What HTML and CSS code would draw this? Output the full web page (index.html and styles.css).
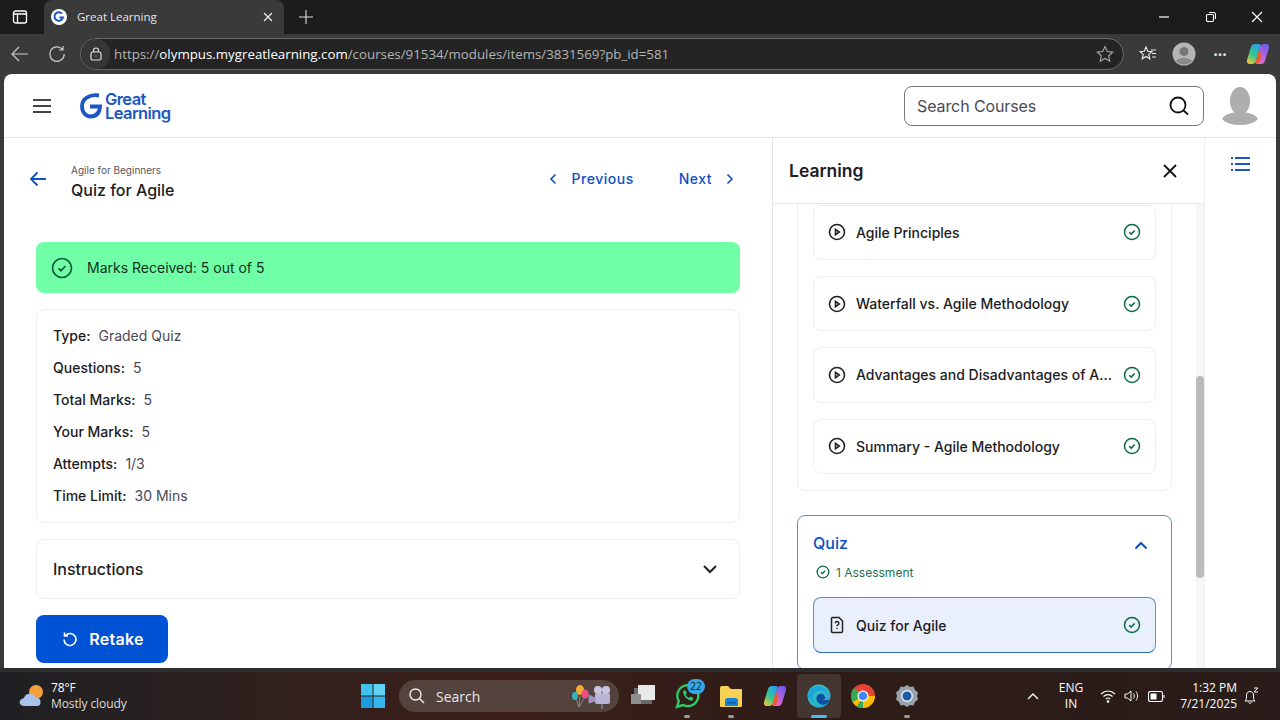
FILE: index.html
```html
<html>
<head>
  <title>Great Learning</title>
  <link rel="stylesheet" href="styles.css">
</head>
<body>
  <div class="tabstrip">
    <svg class="sidebar-btn" width="16" height="16" viewBox="0 0 16 16" fill="none" stroke="#fff" stroke-width="1.3"><rect x="1.5" y="2" width="13" height="12" rx="2"/><path d="M1.5 5h13M5.5 5v9" /></svg>
    <div class="tab">
      <svg width="16" height="16" viewBox="0 0 16 16"><circle cx="8" cy="8" r="8" fill="#fff"/><path d="M11 4.6A4.3 4.3 0 1 0 12 8.4H8.4" fill="none" stroke="#1a56c4" stroke-width="2"/></svg>
      <span class="tab-title">Great Learning</span>
      <svg class="tab-x" width="10" height="10" viewBox="0 0 10 10" stroke="#eee" stroke-width="1.2"><path d="M1 1l8 8M9 1l-8 8"/></svg>
    </div>
    <svg class="new-tab" width="14" height="14" viewBox="0 0 14 14" stroke="#ddd" stroke-width="1.1"><path d="M7 0v14M0 7h14"/></svg>
    <div class="win-btns">
      <svg width="12" height="12" viewBox="0 0 12 12" stroke="#fff" stroke-width="1.2"><path d="M1 6h10"/></svg>
      <svg width="12" height="12" viewBox="0 0 12 12" fill="none" stroke="#fff" stroke-width="1.1"><rect x="1.5" y="3.5" width="7" height="7" rx="1.2"/><path d="M4 1.5h4.5a2 2 0 0 1 2 2V8"/></svg>
      <svg width="12" height="12" viewBox="0 0 12 12" stroke="#fff" stroke-width="1.2"><path d="M1 1l10 10M11 1L1 11"/></svg>
    </div>
  </div>

  <div class="toolbar">
    <svg width="18" height="16" viewBox="0 0 18 16" fill="none" stroke="#ccc" stroke-width="1.2"><path d="M17 8H1M8 1L1 8l7 7"/></svg>
    <svg class="reload" width="18" height="18" viewBox="0 0 18 18" fill="none" stroke="#ccc" stroke-width="1.2"><path d="M14.5 4.5A7.2 7.2 0 1 0 16.2 9M15 1v4h-4"/></svg>
    <div class="urlbar">
      <span class="lock-wrap">
        <svg width="14" height="14" viewBox="0 0 14 14" fill="none" stroke="#ddd" stroke-width="1.2"><rect x="2" y="5" width="10" height="8" rx="1.5"/><path d="M4.5 5V3.5a2.5 2.5 0 0 1 5 0V5M6.5 9h1"/></svg>
      </span>
      <span class="url"><span class="url-dim">https://</span>olympus.mygreatlearning.com<span class="url-dim">/courses/91534/modules/items/3831569?pb_id=581</span></span>
      <svg class="url-star" width="18" height="18" viewBox="0 0 18 18" fill="none" stroke="#aaa" stroke-width="1.1"><path d="M9 1.5l2.3 5 5.4.6-4 3.7 1.1 5.4L9 13.5l-4.8 2.7 1.1-5.4-4-3.7 5.4-.6z"/></svg>
    </div>
    <svg class="fav-btn" width="18" height="18" viewBox="0 0 18 18" fill="none" stroke="#eee" stroke-width="1.1"><path d="M7 2l1.8 4.2 4.2.4-3.2 2.8 1 4.4L7 11.5l-3.8 2.3 1-4.4L1 6.6l4.2-.4zM12 5h5M13 8.5h4M13 12h4"/></svg>
    <svg class="profile-btn" width="24" height="24" viewBox="0 0 24 24"><circle cx="12" cy="12" r="11.5" fill="#b5b5b5"/><circle cx="12" cy="9.5" r="4.5" fill="#777"/><path d="M4 19c2-4 14-4 16 0a11 11 0 0 1-16 0z" fill="#888"/></svg>
    <span class="dots">&middot;&middot;&middot;</span>
    <svg class="copilot" width="24" height="24" viewBox="0 0 24 24"><defs><linearGradient id="cpa" x1="0.7" y1="0" x2="0.2" y2="1"><stop offset="0" stop-color="#2f9fe8"/><stop offset=".55" stop-color="#36c98a"/><stop offset="1" stop-color="#f2c53a"/></linearGradient><linearGradient id="cpc" x1="0.8" y1="0" x2="0.2" y2="1"><stop offset="0" stop-color="#6a5cf0"/><stop offset="1" stop-color="#f06ac0"/></linearGradient></defs><path d="M15 22h-4.500c-1 0-1.200-.8-1-1.500L14 5c.5-1.700 2-3 4-3h2.500c2 0 3 2 2.500 4l-4 13c-.5 2-2 3-4 3z" fill="url(#cpc)"/><path d="M9 2h4.500c1 0 1.200.8 1 1.500L10 19c-.5 1.700-2 3-4 3H3.500C1.500 22 .5 20 1 18L5 5c.5-2 2-3 4-3z" fill="url(#cpa)"/><path d="M9.500 20.500L12.500 9c2 1 3 3 2.800 5L13 21c-1 1-3 1-3.500-.5z" fill="#ef5a34"/></svg>
  </div>

  <div class="page">
    <header class="site-head">
      <svg class="burger" width="20" height="16" viewBox="0 0 20 16" stroke="#44444f" stroke-width="2"><path d="M1 2h18M1 8h18M1 14h18"/></svg>
      <div class="logo">
        <svg width="24" height="28" viewBox="0 0 24 28" fill="none" stroke="#1a56c4" stroke-width="3.800"><path d="M20 3.500C10 2 3 7 3 14c0 6.500 4 10.500 8.500 10.500 5 0 9-3 9.500-10H11"/></svg>
        <div class="logo-text">Great<br>Learning</div>
      </div>
      <div class="search">
        <span class="search-text">Search Courses</span>
        <svg width="20" height="20" viewBox="0 0 20 20" fill="none" stroke="#111" stroke-width="1.800"><circle cx="9" cy="9" r="7.500"/><path d="M14.500 14.500l4.500 4"/></svg>
      </div>
      <svg class="avatar" width="36" height="38" viewBox="0 0 36 38" fill="#aeaeae"><ellipse cx="18" cy="14" rx="10" ry="14"/><path d="M0 32c3-5 10-7 18-7s15 2 18 7c-4 4-10 6-18 6S4 36 0 32z"/></svg>
    </header>

    <div class="body-row">
      <main class="main">
        <div class="crumb-row">
          <svg class="back" width="18" height="16" viewBox="0 0 18 16" fill="none" stroke="#0b50c4" stroke-width="1.800"><path d="M17 8H2M8.500 1.500L2 8l6.500 6.500"/></svg>
          <div class="crumb">
            <div class="crumb-top">Agile for Beginners</div>
            <div class="crumb-title">Quiz for Agile</div>
          </div>
          <div class="pager">
            <svg width="8" height="12" viewBox="0 0 8 12" fill="none" stroke="#0b50c4" stroke-width="1.600"><path d="M6.500 1.500L2 6l4.500 4.500"/></svg>
            <span class="pager-prev">Previous</span>
            <span class="pager-next">Next</span>
            <svg width="8" height="12" viewBox="0 0 8 12" fill="none" stroke="#0b50c4" stroke-width="1.600"><path d="M1.500 1.500L6 6l-4.500 4.500"/></svg>
          </div>
        </div>

        <div class="banner">
          <svg width="22" height="22" viewBox="0 0 22 22" fill="none" stroke="#0a5a3a" stroke-width="1.700"><circle cx="11" cy="11" r="9.500"/><path d="M7.500 11.300l2.500 2.400 4.500-4.700"/></svg>
          <span>Marks Received: 5 out of 5</span>
        </div>

        <div class="info">
          <div class="info-row"><b>Type:</b>Graded Quiz</div>
          <div class="info-row"><b>Questions:</b>5</div>
          <div class="info-row"><b>Total Marks:</b>5</div>
          <div class="info-row"><b>Your Marks:</b>5</div>
          <div class="info-row"><b>Attempts:</b>1/3</div>
          <div class="info-row"><b>Time Limit:</b>30 Mins</div>
        </div>

        <div class="instructions">
          <span>Instructions</span>
          <svg width="16" height="10" viewBox="0 0 16 10" fill="none" stroke="#222" stroke-width="2"><path d="M2 2l6 6 6-6"/></svg>
        </div>

        <button class="retake">
          <svg width="16" height="16" viewBox="0 0 16 16" fill="none" stroke="#fff" stroke-width="1.600"><path d="M3.500 4.500A6 6 0 1 1 2 8.500M2.500 1.500v3.500H6"/></svg>
          Retake
        </button>
      </main>

      <aside class="learning">
        <div class="learning-head">
          <h2>Learning</h2>
          <svg width="14" height="14" viewBox="0 0 14 14" stroke="#111" stroke-width="1.800"><path d="M1 1l12 12M13 1L1 13"/></svg>
        </div>
        <div class="learning-body">
          <div class="scroller">
            <section class="module">
              <div class="lesson">
                <svg class="kind" width="18" height="18" viewBox="0 0 18 18" fill="none" stroke="#222" stroke-width="1.600"><circle cx="9" cy="9" r="7.500"/><path d="M7.500 6.300l3.800 2.700-3.800 2.700z"/></svg>
                <span class="lesson-name">Agile Principles</span>
                <svg class="done" width="18" height="18" viewBox="0 0 18 18" fill="none" stroke="#0a6a48" stroke-width="1.500"><circle cx="9" cy="9" r="7.500"/><path d="M6.200 9.200l2 1.900 3.500-3.700"/></svg>
              </div>
              <div class="lesson">
                <svg class="kind" width="18" height="18" viewBox="0 0 18 18" fill="none" stroke="#222" stroke-width="1.600"><circle cx="9" cy="9" r="7.500"/><path d="M7.500 6.300l3.800 2.700-3.800 2.700z"/></svg>
                <span class="lesson-name">Waterfall vs. Agile Methodology</span>
                <svg class="done" width="18" height="18" viewBox="0 0 18 18" fill="none" stroke="#0a6a48" stroke-width="1.500"><circle cx="9" cy="9" r="7.500"/><path d="M6.200 9.200l2 1.900 3.500-3.700"/></svg>
              </div>
              <div class="lesson">
                <svg class="kind" width="18" height="18" viewBox="0 0 18 18" fill="none" stroke="#222" stroke-width="1.600"><circle cx="9" cy="9" r="7.500"/><path d="M7.500 6.300l3.800 2.700-3.800 2.700z"/></svg>
                <span class="lesson-name">Advantages and Disadvantages of A...</span>
                <svg class="done" width="18" height="18" viewBox="0 0 18 18" fill="none" stroke="#0a6a48" stroke-width="1.500"><circle cx="9" cy="9" r="7.500"/><path d="M6.200 9.200l2 1.900 3.500-3.700"/></svg>
              </div>
              <div class="lesson">
                <svg class="kind" width="18" height="18" viewBox="0 0 18 18" fill="none" stroke="#222" stroke-width="1.600"><circle cx="9" cy="9" r="7.500"/><path d="M7.500 6.300l3.800 2.700-3.800 2.700z"/></svg>
                <span class="lesson-name">Summary - Agile Methodology</span>
                <svg class="done" width="18" height="18" viewBox="0 0 18 18" fill="none" stroke="#0a6a48" stroke-width="1.500"><circle cx="9" cy="9" r="7.500"/><path d="M6.200 9.200l2 1.900 3.500-3.700"/></svg>
              </div>
            </section>
            <section class="module module-open">
              <div class="module-head">
                <span>Quiz</span>
                <svg width="14" height="9" viewBox="0 0 14 9" fill="none" stroke="#0b50c4" stroke-width="2"><path d="M1.500 7.500L7 2l5.500 5.500"/></svg>
              </div>
              <div class="module-meta">
                <svg width="14" height="14" viewBox="0 0 18 18" fill="none" stroke="#0a6a48" stroke-width="1.700"><circle cx="9" cy="9" r="7.500"/><path d="M6.200 9.200l2 1.900 3.500-3.700"/></svg>
                <span>1 Assessment</span>
              </div>
              <div class="lesson lesson-active">
                <svg class="kind" width="18" height="18" viewBox="0 0 18 18" fill="none" stroke="#222" stroke-width="1.500"><path d="M4.500 1.500H11L14.500 5v10.500a1 1 0 0 1-1 1h-9a1 1 0 0 1-1-1v-13a1 1 0 0 1 1-1z"/><path d="M7.300 7.300a1.800 1.800 0 1 1 2.600 1.600c-.6.300-.9.700-.9 1.400M9 12v1"/></svg>
                <span class="lesson-name">Quiz for Agile</span>
                <svg class="done" width="18" height="18" viewBox="0 0 18 18" fill="none" stroke="#0a6a48" stroke-width="1.500"><circle cx="9" cy="9" r="7.500"/><path d="M6.200 9.200l2 1.900 3.500-3.700"/></svg>
              </div>
            </section>
          </div>
          <div class="scrollbar"><div class="scroll-thumb"></div></div>
        </div>
      </aside>

      <div class="rail">
        <svg width="20" height="16" viewBox="0 0 20 16" stroke="#1a56c4" stroke-width="1.800"><path d="M5 2h15M5 8h15M5 14h15M1 2h2M1 8h2M1 14h2"/></svg>
      </div>
    </div>
  </div>

  <footer class="taskbar">
    <div class="weather">
      <svg width="28" height="26" viewBox="0 0 28 26"><circle cx="18" cy="9" r="7" fill="#f2a13a"/><path d="M7 23c-7 0-7-7-1-8 1-5 9-6 11-1 6-1 8 9 2 9z" fill="#a9c2ea"/></svg>
      <div class="weather-text">78°F<br><span>Mostly cloudy</span></div>
    </div>
    <div class="task-center">
      <svg class="start" width="24" height="24" viewBox="0 0 24 24"><rect width="11.500" height="11.500" fill="#3cc4f2"/><rect x="12.500" width="11.500" height="11.500" fill="#5fd2f6"/><rect y="12.500" width="11.500" height="11.500" fill="#1c9be0"/><rect x="12.500" y="12.500" width="11.500" height="11.500" fill="#36b4ec"/></svg>
      <div class="task-search">
        <svg width="16" height="16" viewBox="0 0 16 16" fill="none" stroke="#eee" stroke-width="1.400"><circle cx="6.500" cy="6.500" r="5.500"/><path d="M10.500 10.500l4.500 4.500"/></svg>
        <span>Search</span>
        <svg class="search-art" width="48" height="26" viewBox="-4 0 48 26"><path d="M9 13L8 24M5 15l3 9M14 14l-6 10" stroke="#aaa" stroke-width=".6"/><ellipse cx="9" cy="7" rx="4" ry="5" fill="#f2b02e"/><ellipse cx="14" cy="11" rx="3.500" ry="4.500" fill="#ee4f86"/><ellipse cx="4" cy="13" rx="3" ry="4" fill="#32b3bd"/><rect x="24" y="10" width="15" height="11" rx="2" fill="#b9b3d6"/><circle cx="27" cy="7" r="4" fill="#c9c4e2"/><circle cx="35" cy="7" r="4" fill="#c9c4e2"/><path d="M18 12l6 3v3l-6 2zM31 21v5" fill="#9d97bd" stroke="#9d97bd"/></svg>
      </div>
      <div class="task-app task-app-first">
        <svg width="24" height="22" viewBox="0 0 24 22"><rect x="3" y="3" width="18" height="16" fill="#6a6a6a"/><rect x="7" y="0" width="17" height="15" fill="#e8e8e8"/><rect x="0" y="9" width="10" height="10" fill="#8f8f8f"/></svg>
      </div>
      <div class="task-app">
        <svg width="26" height="26" viewBox="0 0 26 26" fill="none"><path d="M3 24l1.800-6A10.500 10.500 0 1 1 9 22z" stroke="#2ecb68" stroke-width="2.400"/><path d="M9 8c0 5 4 9 9 10l1.500-3-3-1.500-1.500 1.500c-1.500-.7-2.800-2-3.500-3.500l1.500-1.500L11 7z" fill="#2ecb68"/></svg>
        <span class="wa-badge">22</span>
        <i class="pip"></i>
      </div>
      <div class="task-app">
        <svg width="24" height="24" viewBox="0 0 24 24"><path d="M1 4a2 2 0 0 1 2-2h6l3 3h10a1 1 0 0 1 1 1v16a1 1 0 0 1-1 1H2a1 1 0 0 1-1-1z" fill="#f7d154"/><path d="M6 22v-5a3 3 0 0 1 3-3h7a3 3 0 0 1 3 3v5z" fill="#1484d8"/><rect x="8" y="18" width="9" height="1.500" fill="#0a5ca8"/></svg>
        <i class="pip"></i>
      </div>
      <div class="task-app">
        <svg width="24" height="24" viewBox="0 0 24 24"><path d="M15 22h-4.500c-1 0-1.200-.8-1-1.500L14 5c.5-1.700 2-3 4-3h2.500c2 0 3 2 2.500 4l-4 13c-.5 2-2 3-4 3z" fill="url(#cpc)"/><path d="M9 2h4.500c1 0 1.200.8 1 1.500L10 19c-.5 1.700-2 3-4 3H3.500C1.500 22 .5 20 1 18L5 5c.5-2 2-3 4-3z" fill="url(#cpa)"/><path d="M9.500 20.500L12.500 9c2 1 3 3 2.800 5L13 21c-1 1-3 1-3.500-.5z" fill="#ef5a34"/></svg>
      </div>
      <div class="task-app task-app-on">
        <svg width="24" height="24" viewBox="0 0 24 24"><defs><linearGradient id="edg" x1="0" y1="0" x2="1" y2="1"><stop offset="0" stop-color="#35d6a0"/><stop offset="1" stop-color="#2a9be0"/></linearGradient></defs><circle cx="12" cy="12" r="11.500" fill="url(#edg)"/><path d="M23 15c-1 5-7 7-10 5-4-2-5-8-1-10 3-1 5 0 6 3 1 2-1 3-4 3h9z" fill="#0c4e9e"/><path d="M1 11C1 6 6 2 11 2c5 0 8 3 9 7-3-3-9-3-12 0-2 2-3 6 0 10-4-1-7-4-7-8z" fill="#1aa7e0"/></svg>
        <i class="pip pip-on"></i>
      </div>
      <div class="task-app">
        <svg width="24" height="24" viewBox="0 0 24 24"><circle cx="12" cy="12" r="12" fill="#e94235"/><path d="M12 12L1.600 18A12 12 0 0 1 3 4z" fill="#34a853"/><path d="M12 12h12a12 12 0 0 1-12 12 12 12 0 0 1-10.400-6z" fill="#fbbc04"/><path d="M12 12l-6 10.400A12 12 0 0 0 12 24z" fill="#34a853"/><circle cx="12" cy="12" r="5.500" fill="#fff"/><circle cx="12" cy="12" r="4.300" fill="#4285f4"/></svg>
      </div>
      <div class="task-app">
        <svg width="24" height="24" viewBox="0 0 24 24"><path d="M12 1l3 2 3.500-.5L20 6l3 2.500L22 12l1 3.500-3 2.500-1.500 3.500L15 21l-3 2-3-2-3.500.5L4 18l-3-2.500L2 12 1 8.500 4 6l1.500-3.500L9 3z" fill="#9aa3ad"/><circle cx="12" cy="12" r="6" fill="#e6edf5"/><circle cx="12" cy="12" r="4.500" fill="#1c5aa8"/></svg>
        <i class="pip"></i>
      </div>
    </div>
    <div class="tray">
      <svg width="12" height="8" viewBox="0 0 12 8" fill="none" stroke="#fff" stroke-width="1.300"><path d="M1 7l5-5 5 5"/></svg>
      <div class="lang">ENG<br>IN</div>
      <svg class="wifi" width="16" height="14" viewBox="0 0 16 14" fill="none" stroke="#fff" stroke-width="1.100"><path d="M1 5c4-4 10-4 14 0M3.500 7.500c2.500-2.500 6.500-2.500 9 0M5.800 10c1.300-1.200 3.100-1.200 4.400 0"/><circle cx="8" cy="12.500" r=".8" fill="#fff"/></svg>
      <svg width="16" height="14" viewBox="0 0 16 14" fill="none" stroke="#fff" stroke-width="1"><path d="M1 5h2.500L7 2v10L3.500 9H1zM9.500 4.500c1 1.500 1 3.500 0 5M12 2.500c2 2.500 2 6.500 0 9"/></svg>
      <svg width="17" height="11" viewBox="0 0 17 11" fill="none" stroke="#fff" stroke-width="1.100"><rect x=".5" y=".5" width="14" height="10" rx="2"/><rect x="2.500" y="2.500" width="6" height="6" fill="#fff" stroke="none"/><path d="M16 4v3"/></svg>
      <div class="clock">1:32 PM<br>7/21/2025</div>
      <svg width="16" height="18" viewBox="0 0 16 18" fill="none" stroke="#fff" stroke-width="1"><path d="M1 14h10c-1-1-1.500-2-1.500-4V8c0-2-1.500-3.500-3.500-3.500S2.500 6 2.500 8v2c0 2-.5 3-1.500 4zM4.500 15.500c.5 1 2.500 1 3 0M10 1h4l-4 4h4"/></svg>
    </div>
  </footer>
</body>
</html>
```

FILE: styles.css
```css
html, body {
  margin: 0;
  padding: 0;
}
body {
  width: 1280px;
  height: 720px;
  overflow: hidden;
  background: #3a3a3a;
  font-family: Inter, "Liberation Sans", sans-serif;
  color: #1c1c24;
}
svg {
  display: block;
  flex: none;
}

/* browser chrome */
.tabstrip {
  height: 34px;
  background: #1c1c1c;
  display: flex;
  align-items: center;
  padding-left: 12px;
}
.tab {
  width: 240px;
  height: 34px;
  margin-left: 16px;
  box-sizing: border-box;
  padding: 0 11px 0 7px;
  border-radius: 8px 8px 0 0;
  background: #3a3a3a;
  display: flex;
  align-items: center;
}
.tab-title {
  flex: 1;
  margin-left: 10px;
  padding-bottom: 2px;
  font: 11.5px "Open Sans", sans-serif;
  color: #e4e4e4;
}
.new-tab {
  margin-left: 15px;
}
.win-btns {
  margin-left: auto;
  width: 138px;
  padding: 0 17px 0 16px;
  box-sizing: border-box;
  display: flex;
  align-items: center;
  justify-content: space-between;
}
.toolbar {
  height: 40px;
  background: #3a3a3a;
  display: flex;
  align-items: center;
  padding-left: 11px;
}
.reload {
  margin-left: 19px;
}
.urlbar {
  width: 1044px;
  height: 32px;
  margin-left: 14px;
  box-sizing: border-box;
  border: 1px solid #6a6a6a;
  border-radius: 16px;
  background: #242424;
  display: flex;
  align-items: center;
  padding-right: 9px;
}
.lock-wrap {
  width: 28px;
  height: 30px;
  margin-left: 1px;
  border-radius: 15px;
  background: #363636;
  display: flex;
  align-items: center;
  justify-content: center;
}
.url {
  margin-left: 4px;
  font: 13.3px "Open Sans", sans-serif;
  color: #fff;
}
.url-dim {
  color: #b4b4b4;
}
.url-star {
  margin-left: auto;
}
.fav-btn {
  margin-left: 15px;
}
.profile-btn {
  margin-left: 15px;
}
.dots {
  margin-left: 12px;
  width: 24px;
  text-align: center;
  font: bold 16px "Open Sans", sans-serif;
  color: #ddd;
}
.copilot {
  margin-left: 14px;
}

/* page */
.page {
  width: 1272px;
  height: 594px;
  margin-left: 4px;
  background: #fff;
  border-radius: 8px 8px 0 0;
  overflow: hidden;
}
.site-head {
  height: 64px;
  box-sizing: border-box;
  border-bottom: 1px solid #e6e6e6;
  display: flex;
  align-items: center;
  padding: 0 18px 0 28px;
}
.logo {
  margin-left: 27px;
  display: flex;
  align-items: center;
  gap: 2px;
}
.logo-text {
  font: 600 16.5px/14px Inter, sans-serif;
  letter-spacing: -.6px;
  color: #1a56c4;
}
.search {
  margin-left: auto;
  width: 300px;
  height: 40px;
  box-sizing: border-box;
  border: 1px solid #777;
  border-radius: 8px;
  padding: 0 14px 0 12px;
  display: flex;
  align-items: center;
  justify-content: space-between;
}
.search-text {
  font-size: 16px;
  letter-spacing: -.1px;
  color: #4a4a55;
}
.avatar {
  margin-left: 18px;
}
.body-row {
  display: flex;
  height: 530px;
}

/* left column */
.main {
  width: 769px;
  box-sizing: border-box;
  border-right: 1px solid #e6e6e6;
  padding: 0 32px;
}
.crumb-row {
  height: 104px;
  display: flex;
  align-items: flex-start;
  padding-top: 26px;
  box-sizing: border-box;
}
.back {
  margin: 7px 0 0 -7px;
}
.crumb {
  margin-left: 24px;
}
.crumb-top {
  font-size: 10px;
  line-height: 12px;
  color: #55555f;
}
.crumb-title {
  margin-top: 4px;
  font-size: 16px;
  line-height: 20px;
  font-weight: 500;
}
.pager {
  margin-left: auto;
  margin-right: 6px;
  margin-top: 6px;
  display: flex;
  align-items: center;
  font-size: 14px;
  line-height: 17px;
  font-weight: 500;
  letter-spacing: .5px;
  color: #0b50c4;
}
.pager-prev {
  margin-left: 15px;
}
.pager-next {
  margin: 0 14px 0 45px;
}
.banner {
  height: 51px;
  border-radius: 8px;
  background: #70ffa6;
  display: flex;
  align-items: center;
  padding-left: 15px;
  gap: 14px;
  font-size: 14px;
  color: #10301f;
}
.info {
  margin-top: 16px;
  height: 214px;
  box-sizing: border-box;
  border: 1px solid #eeeef0;
  border-radius: 8px;
  padding: 10px 16px;
}
.info-row {
  height: 32px;
  line-height: 32px;
  font-size: 14px;
  color: #4a4a55;
}
.info-row b {
  font-weight: 500;
  color: #1c1c24;
  margin-right: 8px;
}
.instructions {
  margin-top: 16px;
  height: 60px;
  box-sizing: border-box;
  border: 1px solid #eeeef0;
  border-radius: 8px;
  padding: 0 21px 0 16px;
  display: flex;
  align-items: center;
  justify-content: space-between;
  font-size: 16px;
  font-weight: 500;
}
.retake {
  margin-top: 16px;
  width: 132px;
  height: 48px;
  border: none;
  border-radius: 8px;
  background: #0052d4;
  color: #fff;
  font: 600 16px Inter, sans-serif;
  letter-spacing: .3px;
  display: flex;
  align-items: center;
  justify-content: center;
  gap: 11px;
  padding-left: 8px;
}

/* learning panel */
.learning {
  width: 431px;
  display: flex;
  flex-direction: column;
}
.learning-head {
  height: 66px;
  flex: none;
  box-sizing: border-box;
  border-bottom: 1px solid #e6e6e6;
  padding: 0 27px 0 16px;
  display: flex;
  align-items: center;
  justify-content: space-between;
}
.learning-head h2 {
  margin: 0;
  font-size: 17.5px;
  font-weight: 600;
}
.learning-body {
  flex: 1;
  display: flex;
  overflow: hidden;
}
.scroller {
  flex: 1;
  padding: 0 24px;
}
.module {
  box-sizing: border-box;
  border: 1px solid #eeeef0;
  border-radius: 8px;
  padding: 0 15px 16px;
  display: flex;
  flex-direction: column;
  gap: 16px;
}
.scroller .module:first-child {
  margin-top: -20.5px;
  padding-top: 20px;
}
.module-open {
  margin-top: 24px;
  border-color: #5f8fd0;
  gap: 0;
}
.module-head {
  height: 53px;
  display: flex;
  align-items: center;
  justify-content: space-between;
  padding-right: 8px;
  font-size: 16px;
  font-weight: 500;
  color: #0b50c4;
}
.module-head svg {
  margin-top: 5px;
}
.module-meta {
  display: flex;
  align-items: center;
  gap: 6px;
  margin: -5px 0 17px 3px;
  height: 16px;
  font-size: 12px;
  color: #1f7050;
}
.lesson {
  height: 55.4px;
  flex: none;
  box-sizing: border-box;
  border: 1px solid #eeeef0;
  border-radius: 8px;
  padding: 0 14px;
  display: flex;
  align-items: center;
  font-size: 14px;
  font-weight: 500;
  color: #1c1c24;
}
.lesson-name {
  flex: 1;
  margin-left: 10px;
  white-space: nowrap;
}
.lesson-active {
  height: 56px;
  border-color: #5f8fd0;
  border-bottom-color: #2f66b8;
  background: #e9f0fb;
}
.scrollbar {
  width: 8px;
  background: #f7f7f7;
  flex: none;
  padding-top: 172px;
}
.scroll-thumb {
  height: 202px;
  border-radius: 4px;
  background: #bbb;
}
.rail {
  width: 72px;
  box-sizing: border-box;
  border-left: 1px solid #eee;
  padding: 18px 0 0 25px;
}

/* taskbar */
.taskbar {
  height: 48px;
  margin-top: 4px;
  background: linear-gradient(90deg, #1f2024 0%, #33201c 25%, #3c1f18 40%, #301c18 60%, #2a1c1a 100%);
  box-shadow: 0 -4px 0 #2e2e30;
  display: flex;
  align-items: center;
  position: relative;
  color: #fff;
  font-family: "Open Sans", sans-serif;
}
.weather {
  margin-left: 18px;
  display: flex;
  align-items: center;
  gap: 5px;
  font-size: 12px;
  line-height: 16px;
  letter-spacing: -.1px;
}
.weather-text span {
  color: #ddd;
}
.task-center {
  position: absolute;
  left: 361px;
  top: 0;
  height: 48px;
  display: flex;
  align-items: center;
}
.task-search {
  margin-left: 14px;
  width: 220px;
  height: 32px;
  box-sizing: border-box;
  padding: 0 4px 0 10px;
  border-radius: 16px;
  background: #54423c;
  display: flex;
  align-items: center;
  gap: 11px;
  font-size: 14px;
  color: #e8e8e8;
}
.search-art {
  margin-left: auto;
}
.task-app {
  width: 44px;
  height: 44px;
  display: flex;
  align-items: center;
  justify-content: center;
  position: relative;
  border-radius: 4px;
}
.task-app-first {
  margin-left: 2px;
}
.task-app-on {
  background: #43352f;
}
.pip {
  position: absolute;
  left: 19px;
  bottom: 0;
  width: 6px;
  height: 3px;
  border-radius: 2px;
  background: #999;
}
.pip-on {
  left: 14px;
  width: 16px;
  background: #4cb8f0;
}
.wa-badge {
  position: absolute;
  left: 22px;
  top: 5px;
  width: 18px;
  height: 15px;
  border-radius: 9px;
  background: #35a8e8;
  color: #10202c;
  font-size: 10px;
  line-height: 15px;
  text-align: center;
}
.tray {
  margin-left: auto;
  display: flex;
  align-items: center;
  padding-right: 20px;
}
.lang {
  margin-left: 14px;
  width: 36px;
  text-align: center;
  font-size: 12px;
  line-height: 16px;
}
.wifi {
  margin-left: 11px;
}
.tray svg + svg {
  margin-left: 8px;
}
.clock {
  margin: 0 7px 0 2px;
  width: 70px;
  text-align: right;
  font-size: 12px;
  line-height: 16px;
}
```
